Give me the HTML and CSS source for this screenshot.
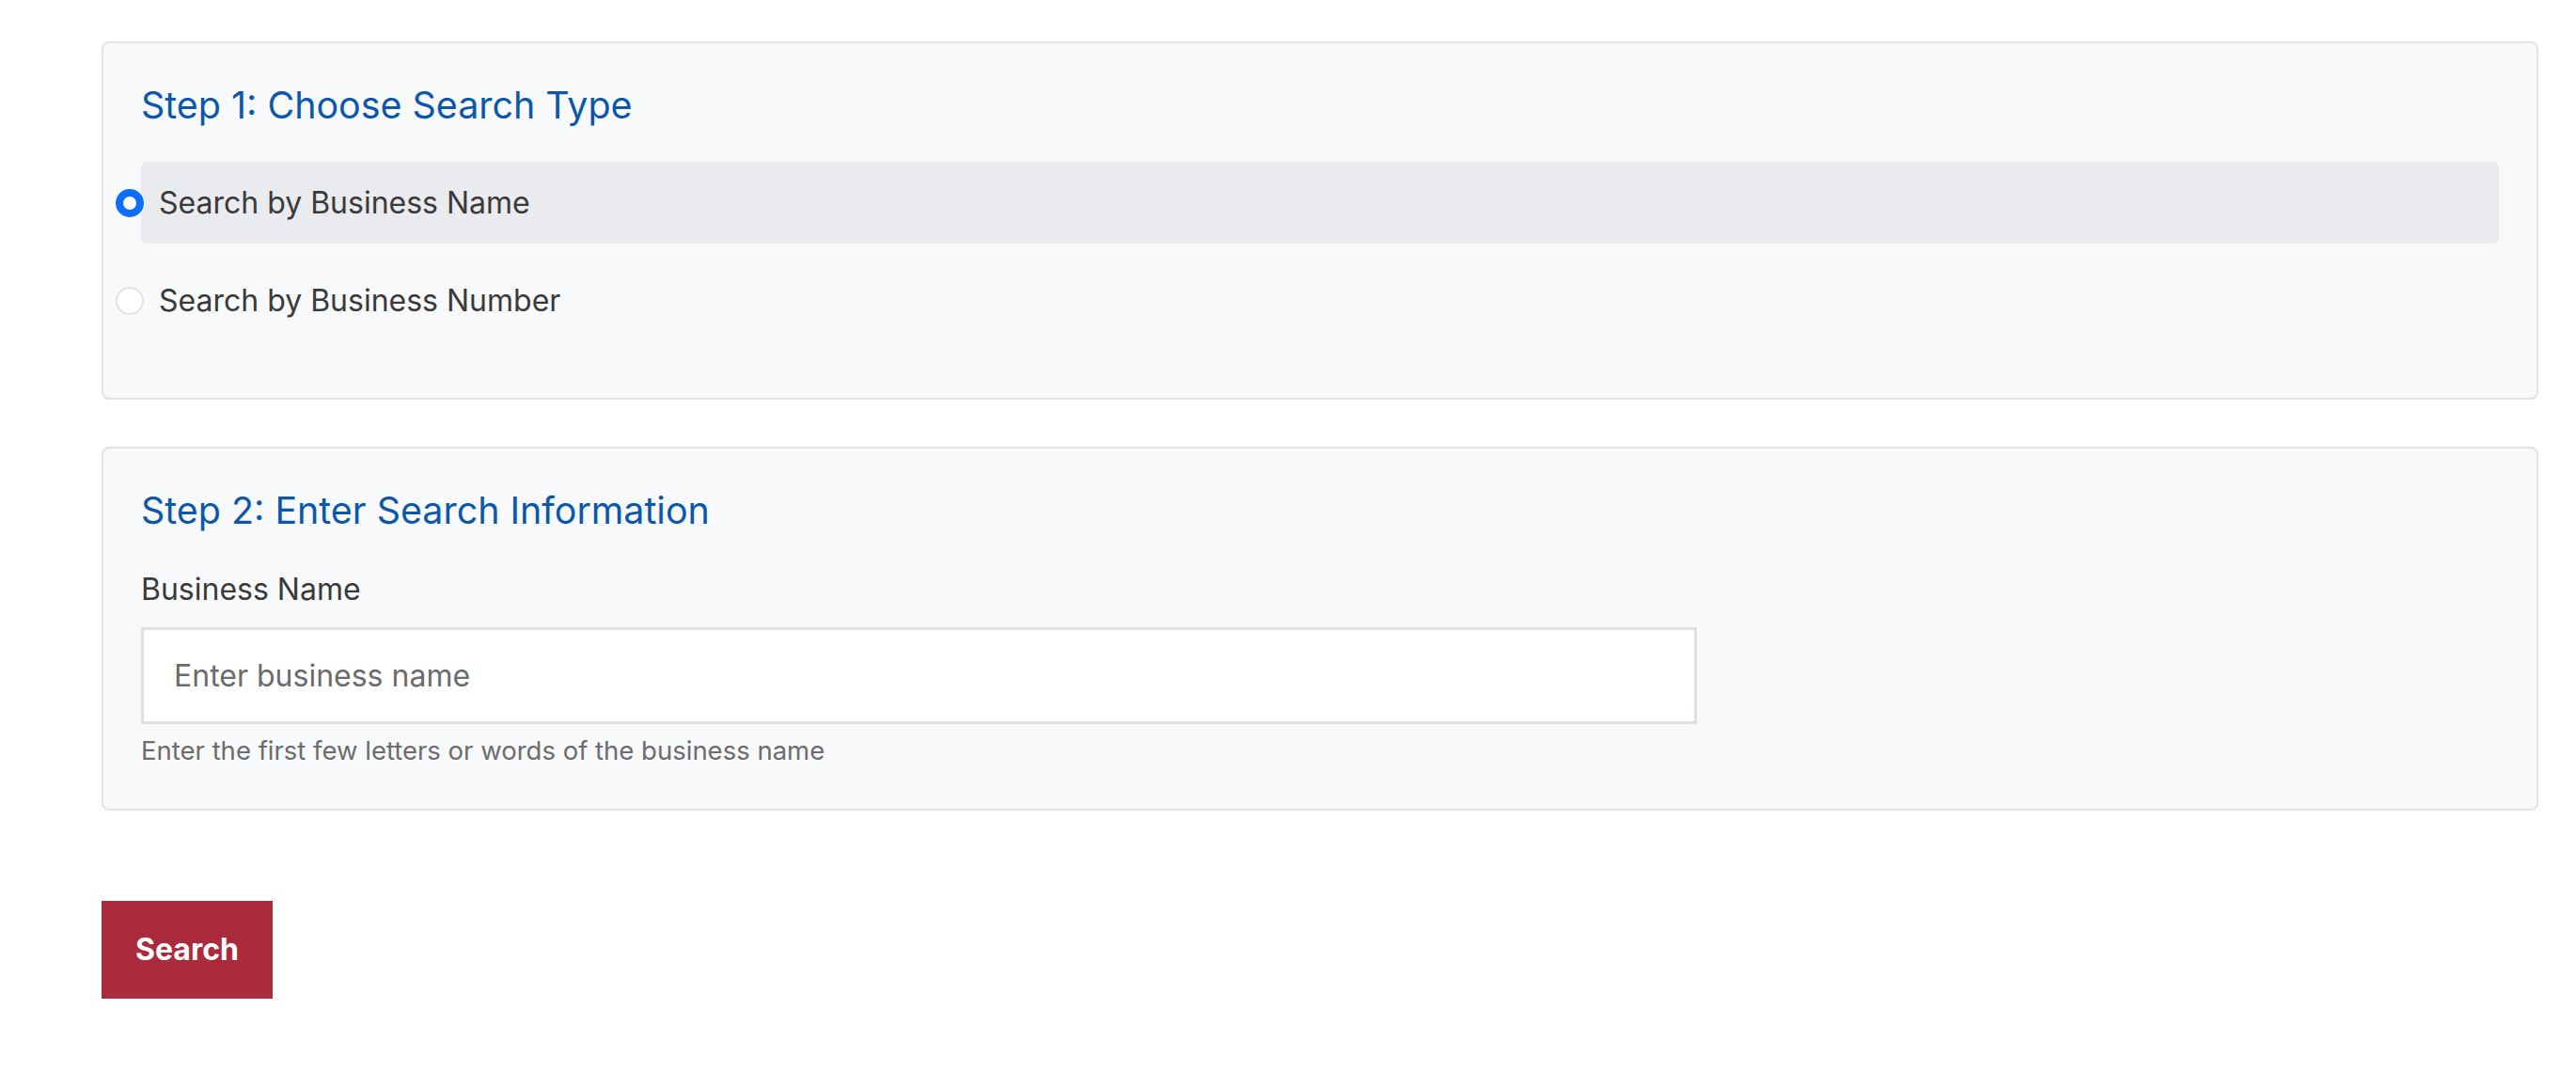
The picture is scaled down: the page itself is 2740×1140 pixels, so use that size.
FILE: index.html
```html
<!DOCTYPE html>
<html lang="en">
<head>
    <meta charset="UTF-8">
    <title>Business Search</title>
    <link rel="stylesheet" href="styles.css">
</head>
<body>

    <form class="search-form" onsubmit="return false;">

        <fieldset class="step">
            <h2>Step 1: Choose Search Type</h2>

            <label class="option selected">
                <input type="radio" name="searchType" value="name" checked>
                <span>Search by Business Name</span>
            </label>

            <label class="option">
                <input type="radio" name="searchType" value="number">
                <span>Search by Business Number</span>
            </label>
        </fieldset>

        <fieldset class="step">
            <h2>Step 2: Enter Search Information</h2>

            <label class="field-label" for="businessName">Business Name</label>
            <input type="text" id="businessName" placeholder="Enter business name">
            <p class="help">Enter the first few letters or words of the business name</p>
        </fieldset>

        <button type="submit" class="btn-search">Search</button>

    </form>

    <script>
        // Highlight the selected search type
        document.querySelectorAll('.option input').forEach(radio => {
            radio.addEventListener('change', () => {
                document.querySelectorAll('.option').forEach(opt => {
                    opt.classList.toggle('selected', opt.querySelector('input').checked);
                });
            });
        });
    </script>

</body>
</html>
```

FILE: styles.css
```css
body {
    font-family: Inter, "Noto Sans", sans-serif;
    background-color: #ffffff;
    margin: 0;
    padding: 44px 40px 40px 108px;
    color: #333;
}

.step {
    margin: 0 0 50px;
    padding: 42px 40px;
    background-color: #f8f9fa;
    border: 2px solid #e1e3e6;
    border-radius: 8px;
    min-width: 0;
}

.step h2 {
    margin: 0 0 36px;
    font-size: 39.4px;
    line-height: 48px;
    font-weight: 400;
    color: #0b58ab;
}

.option {
    display: flex;
    align-items: center;
    height: 87px;
    margin-bottom: 17px;
    padding-left: 18px;
    border-radius: 6px;
    font-size: 32px;
    line-height: 48px;
    color: #3a3a3a;
    cursor: pointer;
}

.option:last-child {
    margin-bottom: 18px;
}

.option.selected {
    background-color: #e9ebee;
}

.option input {
    appearance: none;
    -webkit-appearance: none;
    width: 30px;
    height: 30px;
    margin: 0 16px 0 -45px;
    flex-shrink: 0;
    border: 2px solid #dfe2e6;
    border-radius: 50%;
    background: #ffffff;
    box-sizing: border-box;
}

.option input:checked {
    border: 8px solid #0d6efd;
}

.field-label {
    display: block;
    font-size: 32px;
    line-height: 48px;
    color: #3a3a3a;
    margin-bottom: 16px;
}

input[type="text"] {
    display: block;
    box-sizing: border-box;
    width: 66%;
    height: 103px;
    padding: 0 32px;
    font-family: inherit;
    font-size: 32px;
    color: #333;
    background: #ffffff;
    border: 3px solid #dee1e4;
    border-radius: 0;
    outline: none;
}

input[type="text"]::placeholder {
    color: #6b6b6b;
}

.help {
    margin: 8px 0 0;
    font-size: 27.5px;
    line-height: 40px;
    color: #6c6c70;
}

.btn-search {
    margin-top: 46px;
    padding: 32px 36px;
    font-family: inherit;
    font-size: 32px;
    line-height: 40px;
    font-weight: 700;
    color: #ffffff;
    background-color: #aa2b3b;
    border: none;
    border-radius: 0;
    cursor: pointer;
}
```
